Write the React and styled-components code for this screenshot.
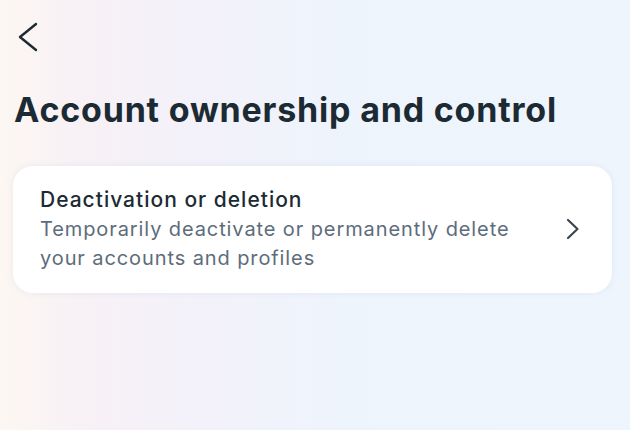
import React from 'react';
import styled, { createGlobalStyle } from 'styled-components';

const GlobalStyle = createGlobalStyle`
  html, body {
    margin: 0;
    padding: 0;
  }
  body {
    font-family: Inter, "Noto Sans", sans-serif;
    color: #1c2b33;
  }
`;

const Page = styled.div`
  width: 630px;
  height: 430px;
  box-sizing: border-box;
  padding: 22px 18px 0 13px;
  background: linear-gradient(90deg, #fdf7f2 0%, #f8f1f6 12%, #f3f1f9 30%, #eef4fc 55%, #eef5fd 100%);
  overflow: hidden;
`;

const BackButton = styled.button`
  display: block;
  width: 22px;
  height: 30px;
  margin-left: 4px;
  padding: 0;
  border: none;
  background: none;
  color: #1c2b33;
  cursor: pointer;
`;

const Title = styled.h1`
  margin: 36px 0 0 1px;
  font-size: 34px;
  font-weight: 700;
  letter-spacing: 0.8px;
  line-height: 44px;
  color: #1c2b33;
`;

const Card = styled.div`
  display: flex;
  align-items: center;
  gap: 16px;
  margin-top: 34px;
  padding: 19px 32px 20px 27px;
  background: #ffffff;
  border-radius: 20px;
  box-shadow: 0 0 6px rgba(200, 210, 225, 0.35);
  cursor: pointer;
`;

const CardText = styled.div`
  flex: 1;
`;

const CardTitle = styled.div`
  font-size: 21px;
  font-weight: 500;
  letter-spacing: 1px;
  line-height: 30px;
  color: #1c2b33;
`;

const CardSub = styled.div`
  font-size: 20px;
  letter-spacing: 0.9px;
  line-height: 29px;
  color: #5d6c7b;
  max-width: 490px;
`;

const ArrowWrap = styled.div`
  display: flex;
  color: #3b4650;
`;

const BackIcon = () => (
  <svg width="22" height="30" viewBox="0 0 22 30" fill="none" stroke="currentColor"
    strokeWidth="2.4" strokeLinecap="round" strokeLinejoin="round">
    <path d="M19 2L3 15l16 13" />
  </svg>
);

const NextIcon = () => (
  <svg width="14" height="22" viewBox="0 0 14 22" fill="none" stroke="currentColor"
    strokeWidth="2.2" strokeLinecap="round" strokeLinejoin="round">
    <path d="M2 2l9.5 9L2 20" />
  </svg>
);

export default function App() {
  return (
    <>
      <GlobalStyle />
      <Page>
        <BackButton aria-label="Back">
          <BackIcon />
        </BackButton>
        <Title>Account ownership and control</Title>
        <Card>
          <CardText>
            <CardTitle>Deactivation or deletion</CardTitle>
            <CardSub>Temporarily deactivate or permanently delete your accounts and profiles</CardSub>
          </CardText>
          <ArrowWrap>
            <NextIcon />
          </ArrowWrap>
        </Card>
      </Page>
    </>
  );
}
